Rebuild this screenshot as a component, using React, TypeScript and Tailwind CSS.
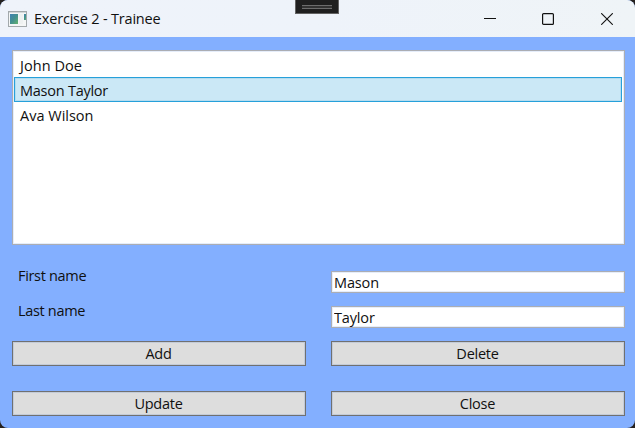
import { useState } from "react";

type Trainee = { first: string; last: string; tracking: string };

const trainees: Trainee[] = [
  { first: "John", last: "Doe", tracking: "tracking-[0.05px]" },
  { first: "Mason", last: "Taylor", tracking: "tracking-[-0.25px]" },
  { first: "Ava", last: "Wilson", tracking: "tracking-[0px]" },
];

function AppIcon() {
  return (
    <svg className="ml-2 h-4 w-[19px] shrink-0" viewBox="0 0 19 16" shapeRendering="crispEdges">
      <defs>
        <linearGradient id="pane" x1="0" y1="0" x2="1" y2="1">
          <stop offset="0" stopColor="#3f83b4" />
          <stop offset="0.5" stopColor="#43908f" />
          <stop offset="1" stopColor="#63b36f" />
        </linearGradient>
      </defs>
      <rect x="0.5" y="0.5" width="18" height="15" fill="#f4f6f6" stroke="#a3a9ac" />
      <rect x="1" y="1" width="17" height="1" fill="#d4d8da" />
      <rect x="2" y="3" width="8" height="10" fill="url(#pane)" />
      <rect x="11" y="3" width="4" height="10" fill="#eef1f1" />
      <rect x="16" y="3" width="2" height="6" fill="url(#pane)" />
    </svg>
  );
}

function TitleBar() {
  return (
    <header className="relative flex h-[37px] items-center bg-linear-to-r from-[#eff3fa] via-[#eef3fa] to-[#eff4f7]">
      <AppIcon />
      <h1 className="ml-[7px] text-[14.5px] leading-5 tracking-[-0.2px]">Exercise 2 - Trainee</h1>
      <div className="absolute top-0 left-[295px] flex h-3.5 w-11 justify-center border border-t-0 border-[#626262] bg-[#1f1f1f] pt-[5px]">
        <div className="h-1 w-[30px] border-y border-[#6d6d6d] bg-[#333]" />
      </div>
      <div className="ml-auto flex">
        <button aria-label="Minimize" className="flex h-9 w-[58px] items-center justify-center">
          <svg width="12" height="12" viewBox="0 0 12 12">
            <path d="M0 5.5H12" stroke="#111" />
          </svg>
        </button>
        <button aria-label="Maximize" className="flex h-9 w-[58px] items-center justify-center">
          <svg width="12" height="12" viewBox="0 0 12 12">
            <rect x="0.6" y="0.6" width="10.8" height="10.8" rx="1" fill="none" stroke="#111" strokeWidth="1.2" />
          </svg>
        </button>
        <button aria-label="Close window" className="flex h-9 w-[58px] items-center justify-center pl-0.5">
          <svg width="12" height="12" viewBox="0 0 12 12">
            <path d="M0.2 0.2L11.8 11.8M11.8 0.2L0.2 11.8" stroke="#111" strokeWidth="1.1" />
          </svg>
        </button>
      </div>
    </header>
  );
}

function ActionButton({ children }: { children: string }) {
  return (
    <button className="h-[25px] border border-[#707070] bg-[#ddd] pr-px text-center leading-[23px] tracking-[-0.25px] shadow-[inset_0_0_0_1px_#c3cbd8]">
      {children}
    </button>
  );
}

export default function App() {
  const [selected, setSelected] = useState(1);
  const current = trainees[selected];
  const inputClass =
    "block h-[22px] w-full border border-[#abadb3] bg-white px-0.5 tracking-[-0.15px] shadow-[inset_0_0_0_1px_#e5edfa] outline-none";

  return (
    <div className="h-[428px] w-[635px] overflow-hidden bg-[#25211f]">
      <main className="flex h-full flex-col overflow-hidden rounded-[8px] bg-[#83afff] font-['Open_Sans','Noto_Sans',sans-serif] text-[14.5px] text-[#101010]">
        <TitleBar />
        <div className="px-3 pt-[13px] pr-2.5">
          <ul className="h-[195px] border border-[#abadb3] bg-white px-px pt-px pr-0.5 shadow-[inset_0_0_0_1px_#e5edfa]">
            {trainees.map((t, i) => (
              <li
                key={t.first}
                onClick={() => setSelected(i)}
                className={`h-[25px] border pl-[5px] leading-[25px] ${t.tracking} ${
                  i === selected
                    ? "border-[#26a0da] bg-[#cbe8f6] shadow-[inset_0_0_0_1px_#b5dcef]"
                    : "border-transparent"
                }`}
              >
                {t.first} {t.last}
              </li>
            ))}
          </ul>
          <div className="mt-[26px] grid grid-cols-2 gap-x-[25px]">
            <label className="h-[35px] pl-1.5 leading-[10px] tracking-[-0.32px]">First name</label>
            <input className={inputClass} value={current.first} readOnly />
            <label className="h-[35px] pl-1.5 leading-[10px] tracking-[-0.32px]">Last name</label>
            <input className={inputClass} value={current.last} readOnly />
          </div>
          <div className="grid grid-cols-2 gap-x-[25px] gap-y-[25px]">
            <ActionButton>Add</ActionButton>
            <ActionButton>Delete</ActionButton>
            <ActionButton>Update</ActionButton>
            <ActionButton>Close</ActionButton>
          </div>
        </div>
      </main>
    </div>
  );
}
